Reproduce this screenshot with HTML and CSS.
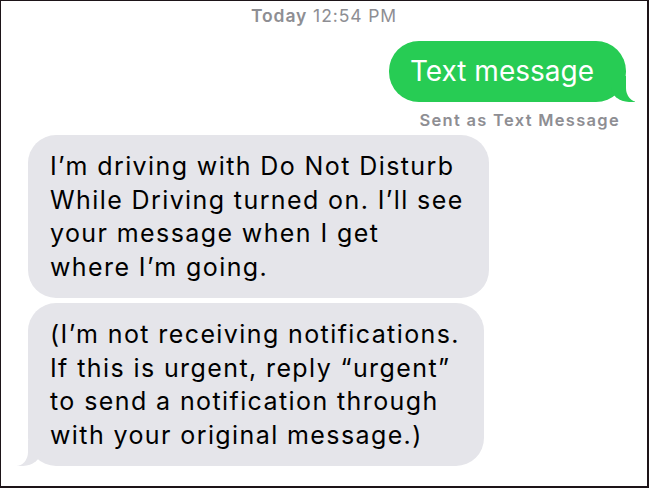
FILE: index.html
```html
<!DOCTYPE html>
<html>
<head>
<meta charset="utf-8">
<link rel="stylesheet" href="styles.css">
</head>
<body>
<div class="frame">
  <div class="stamp"><b>Today</b> 12:54 PM</div>
  <div class="row row-me">
    <div class="bubble me tail-right">Text message</div>
  </div>
  <div class="status">Sent as Text Message</div>
  <div class="row row-them">
    <div class="bubble them b1">I’m driving with Do Not Disturb<br>While Driving turned on. I’ll see<br>your message when I get<br>where I’m going.</div>
  </div>
  <div class="row row-them">
    <div class="bubble them b2 tail-left">(I’m not receiving notifications.<br>If this is urgent, reply “urgent”<br>to send a notification through<br>with your original message.)</div>
  </div>
</div>
</body>
</html>
```

FILE: styles.css
```css
html, body {
  margin: 0;
  padding: 0;
  background: #ffffff;
}
body {
  width: 650px;
  height: 489px;
  overflow: hidden;
  font-family: Inter, "Noto Sans", sans-serif;
}
.frame {
  box-sizing: border-box;
  width: 649px;
  height: 488px;
  border-style: solid;
  border-color: #1d1418;
  border-width: 1px 2px 2px 1px;
  background: #ffffff;
  display: flex;
  flex-direction: column;
}
.stamp {
  text-align: center;
  color: #8e8e93;
  font-size: 17.5px;
  letter-spacing: 0.9px;
  line-height: 20px;
  padding-top: 5px;
}
.stamp b {
  font-weight: 600;
}
.row {
  display: flex;
}
.row-me {
  justify-content: flex-end;
  padding-right: 21px;
  margin-top: 15px;
}
.row-them {
  justify-content: flex-start;
  padding-left: 27px;
}
.bubble {
  position: relative;
  box-sizing: border-box;
}
.me {
  background: #27cc54;
  color: #ffffff;
  font-size: 28px;
  line-height: 34px;
  padding: 13px 32px 14px 21px;
  border-radius: 30px;
}
.status {
  text-align: right;
  padding-right: 27px;
  color: #8e8e93;
  font-size: 16.5px;
  letter-spacing: 1.3px;
  font-weight: 600;
  line-height: 20px;
  margin-top: 8px;
}
.them {
  background: #e5e5ea;
  color: #000000;
  font-size: 25px;
  letter-spacing: 1.4px;
  line-height: 33.5px;
  border-radius: 28px;
  padding: 15px 10px 14px 22px;
  white-space: nowrap;
}
.b1 {
  margin-top: 5px;
  width: 461px;
}
.b2 {
  margin-top: 5px;
  width: 456px;
}
.tail-right::before,
.tail-right::after,
.tail-left::before,
.tail-left::after {
  content: "";
  position: absolute;
  bottom: 0;
}
.tail-right::before {
  right: -9px;
  width: 24px;
  height: 26px;
  background: #27cc54;
  border-bottom-left-radius: 18px 15px;
  z-index: 0;
}
.tail-right::after {
  right: -12px;
  width: 12px;
  height: 28px;
  background: #ffffff;
  border-bottom-left-radius: 12px 14px;
  z-index: 1;
}
.tail-left::before {
  left: -11px;
  width: 24px;
  height: 26px;
  background: #e5e5ea;
  border-bottom-right-radius: 18px 15px;
  z-index: 0;
}
.tail-left::after {
  left: -14px;
  width: 14px;
  height: 28px;
  background: #ffffff;
  border-bottom-right-radius: 12px 14px;
  z-index: 1;
}
```
